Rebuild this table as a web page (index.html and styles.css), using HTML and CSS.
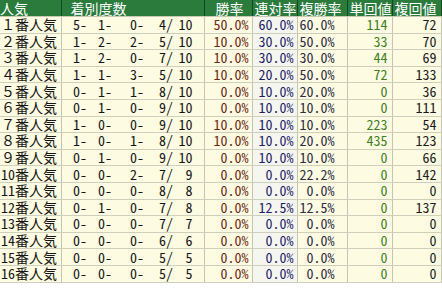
FILE: index.html
```html
<!DOCTYPE html>
<html lang="ja">
<head>
<meta charset="utf-8">
<title>人気別成績</title>
<link rel="stylesheet" href="styles.css">
</head>
<body>
<table class="stats">
  <colgroup>
    <col class="w-pop">
    <col class="w-a"><col class="w-b"><col class="w-c"><col class="w-d"><col class="w-e">
    <col class="w-win"><col class="w-ren"><col class="w-fuku"><col class="w-tan"><col class="w-fkv">
  </colgroup>
  <thead>
    <tr>
      <th class="h-pop">人気</th>
      <th class="h-rec" colspan="5">着別度数</th>
      <th class="h-win">勝率</th>
      <th class="h-ren">連対率</th>
      <th class="h-fuku">複勝率</th>
      <th class="h-tan">単回値</th>
      <th class="h-fkv">複回値</th>
    </tr>
  </thead>
  <tbody>
    <tr><td class="pop">１番人気</td><td class="n">5-</td><td class="n">1-</td><td class="n">0-</td><td class="n">4/</td><td class="n last">10</td><td class="win">50.0%</td><td class="ren">60.0%</td><td class="fuku">60.0%</td><td class="tan">114</td><td class="fkv">72</td></tr>
    <tr><td class="pop">２番人気</td><td class="n">1-</td><td class="n">2-</td><td class="n">2-</td><td class="n">5/</td><td class="n last">10</td><td class="win">10.0%</td><td class="ren">30.0%</td><td class="fuku">50.0%</td><td class="tan">33</td><td class="fkv">70</td></tr>
    <tr><td class="pop">３番人気</td><td class="n">1-</td><td class="n">2-</td><td class="n">0-</td><td class="n">7/</td><td class="n last">10</td><td class="win">10.0%</td><td class="ren">30.0%</td><td class="fuku">30.0%</td><td class="tan">44</td><td class="fkv">69</td></tr>
    <tr><td class="pop">４番人気</td><td class="n">1-</td><td class="n">1-</td><td class="n">3-</td><td class="n">5/</td><td class="n last">10</td><td class="win">10.0%</td><td class="ren">20.0%</td><td class="fuku">50.0%</td><td class="tan">72</td><td class="fkv">133</td></tr>
    <tr><td class="pop">５番人気</td><td class="n">0-</td><td class="n">1-</td><td class="n">1-</td><td class="n">8/</td><td class="n last">10</td><td class="win">0.0%</td><td class="ren">10.0%</td><td class="fuku">20.0%</td><td class="tan">0</td><td class="fkv">36</td></tr>
    <tr><td class="pop">６番人気</td><td class="n">0-</td><td class="n">1-</td><td class="n">0-</td><td class="n">9/</td><td class="n last">10</td><td class="win">0.0%</td><td class="ren">10.0%</td><td class="fuku">10.0%</td><td class="tan">0</td><td class="fkv">111</td></tr>
    <tr><td class="pop">７番人気</td><td class="n">1-</td><td class="n">0-</td><td class="n">0-</td><td class="n">9/</td><td class="n last">10</td><td class="win">10.0%</td><td class="ren">10.0%</td><td class="fuku">10.0%</td><td class="tan">223</td><td class="fkv">54</td></tr>
    <tr><td class="pop">８番人気</td><td class="n">1-</td><td class="n">0-</td><td class="n">1-</td><td class="n">8/</td><td class="n last">10</td><td class="win">10.0%</td><td class="ren">10.0%</td><td class="fuku">20.0%</td><td class="tan">435</td><td class="fkv">123</td></tr>
    <tr><td class="pop">９番人気</td><td class="n">0-</td><td class="n">1-</td><td class="n">0-</td><td class="n">9/</td><td class="n last">10</td><td class="win">0.0%</td><td class="ren">10.0%</td><td class="fuku">10.0%</td><td class="tan">0</td><td class="fkv">66</td></tr>
    <tr><td class="pop">10番人気</td><td class="n">0-</td><td class="n">0-</td><td class="n">2-</td><td class="n">7/</td><td class="n last">9</td><td class="win">0.0%</td><td class="ren">0.0%</td><td class="fuku">22.2%</td><td class="tan">0</td><td class="fkv">142</td></tr>
    <tr><td class="pop">11番人気</td><td class="n">0-</td><td class="n">0-</td><td class="n">0-</td><td class="n">8/</td><td class="n last">8</td><td class="win">0.0%</td><td class="ren">0.0%</td><td class="fuku">0.0%</td><td class="tan">0</td><td class="fkv">0</td></tr>
    <tr><td class="pop">12番人気</td><td class="n">0-</td><td class="n">1-</td><td class="n">0-</td><td class="n">7/</td><td class="n last">8</td><td class="win">0.0%</td><td class="ren">12.5%</td><td class="fuku">12.5%</td><td class="tan">0</td><td class="fkv">137</td></tr>
    <tr><td class="pop">13番人気</td><td class="n">0-</td><td class="n">0-</td><td class="n">0-</td><td class="n">7/</td><td class="n last">7</td><td class="win">0.0%</td><td class="ren">0.0%</td><td class="fuku">0.0%</td><td class="tan">0</td><td class="fkv">0</td></tr>
    <tr><td class="pop">14番人気</td><td class="n">0-</td><td class="n">0-</td><td class="n">0-</td><td class="n">6/</td><td class="n last">6</td><td class="win">0.0%</td><td class="ren">0.0%</td><td class="fuku">0.0%</td><td class="tan">0</td><td class="fkv">0</td></tr>
    <tr><td class="pop">15番人気</td><td class="n">0-</td><td class="n">0-</td><td class="n">0-</td><td class="n">5/</td><td class="n last">5</td><td class="win">0.0%</td><td class="ren">0.0%</td><td class="fuku">0.0%</td><td class="tan">0</td><td class="fkv">0</td></tr>
    <tr><td class="pop">16番人気</td><td class="n">0-</td><td class="n">0-</td><td class="n">0-</td><td class="n">5/</td><td class="n last">5</td><td class="win">0.0%</td><td class="ren">0.0%</td><td class="fuku">0.0%</td><td class="tan">0</td><td class="fkv">0</td></tr>
  </tbody>
</table>
</body>
</html>
```

FILE: styles.css
```css
html, body {
  margin: 0;
  padding: 0;
  background: #ffffff;
}

.stats {
  border-collapse: collapse;
  table-layout: fixed;
  width: 441px;
  font-family: "Noto Sans Mono CJK JP", "Noto Sans CJK JP", monospace;
  font-size: 14px;
  line-height: 15px;
  color: #161616;
}

.w-pop { width: 61px; }
.w-a { width: 26px; }
.w-b { width: 25px; }
.w-c { width: 32px; }
.w-d { width: 29px; }
.w-e { width: 31px; }
.w-win { width: 48px; }
.w-ren { width: 45px; }
.w-fuku { width: 50px; }
.w-tan { width: 45px; }
.w-fkv { width: 49px; }

.stats th {
  background: #2a7b3c;
  color: #ffffff;
  font-weight: normal;
  font-size: 14px;
  height: 16px;
  padding: 0;
  text-align: left;
  white-space: nowrap;
  border-right: 1px solid #0e4a1d;
  border-bottom: 1px solid #c9c9b6;
}

.h-pop { padding-left: 1px; }
.stats .h-rec { padding-left: 9px; }
.stats .h-win { padding-left: 11px; }
.stats .h-ren { padding-left: 2px; }
.stats .h-fuku { padding-left: 2px; }
.stats .h-tan { padding-left: 2px; }
.stats .h-fkv { padding-left: 2px; }

.stats td {
  height: 15.6px;
  padding: 0;
  background: #fdfbe2;
  border-bottom: 1px solid #cfcfbd;
  white-space: nowrap;
  text-align: right;
}

.stats .pop {
  text-align: left;
  padding-left: 1px;
  border-right: 1px solid #c4c4b0;
}

.stats .n { padding-right: 0; }
.stats .last {
  padding-right: 11px;
  border-right: 1px solid #c4c4b0;
}

.stats .win {
  color: #6b2a12;
  padding-right: 3px;
  border-right: 1px solid #c4c4b0;
}

.stats .ren {
  color: #1e1e66;
  background: #f6f6f0;
  padding-right: 3px;
  border-right: 1px solid #c4c4b0;
}

.stats .fuku {
  color: #2c2c44;
  padding-right: 12px;
  border-right: 1px solid #c4c4b0;
}

.stats .tan {
  color: #3f7f1f;
  padding-right: 4px;
  border-right: 1px solid #c4c4b0;
}

.stats .fkv {
  color: #1c1c1c;
  padding-right: 4px;
  border-right: 1px solid #c4c4b0;
}
```
